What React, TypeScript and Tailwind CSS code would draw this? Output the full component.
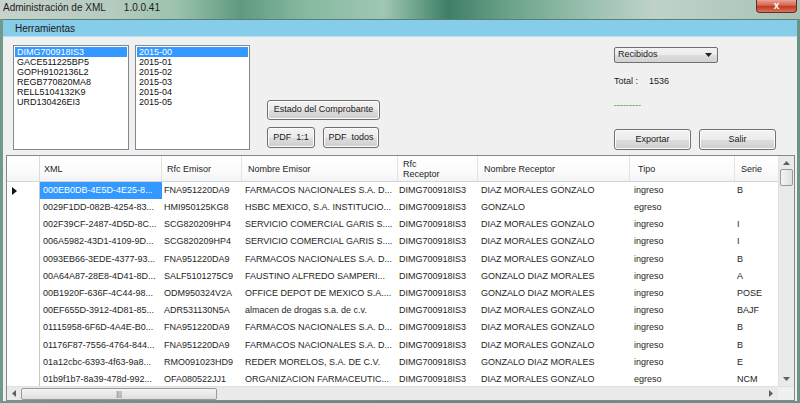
import React from "react";

const rows: string[][] = [
  ["000EB0DB-4E5D-4E25-8...", "FNA951220DA9", "FARMACOS NACIONALES S.A. D...", "DIMG700918IS3", "DIAZ MORALES GONZALO", "ingreso", "B"],
  ["0029F1DD-082B-4254-83...", "HMI950125KG8", "HSBC MEXICO, S.A. INSTITUCIO...", "DIMG700918IS3", "GONZALO", "egreso", ""],
  ["002F39CF-2487-4D5D-8C...", "SCG820209HP4", "SERVICIO COMERCIAL GARIS S....", "DIMG700918IS3", "DIAZ MORALES GONZALO", "ingreso", "I"],
  ["006A5982-43D1-4109-9D...", "SCG820209HP4", "SERVICIO COMERCIAL GARIS S....", "DIMG700918IS3", "DIAZ MORALES GONZALO", "ingreso", "I"],
  ["0093EB66-3EDE-4377-93...", "FNA951220DA9", "FARMACOS NACIONALES S.A. D...", "DIMG700918IS3", "DIAZ MORALES GONZALO", "ingreso", "B"],
  ["00A64A87-28E8-4D41-8D...", "SALF5101275C9", "FAUSTINO ALFREDO SAMPERI...", "DIMG700918IS3", "GONZALO DIAZ MORALES", "ingreso", "A"],
  ["00B1920F-636F-4C44-98...", "ODM950324V2A", "OFFICE DEPOT DE MEXICO S.A....", "DIMG700918IS3", "GONZALO DIAZ MORALES", "ingreso", "POSE"],
  ["00EF655D-3912-4D81-85...", "ADR531130N5A", "almacen de drogas s.a. de c.v.", "DIMG700918IS3", "DIAZ MORALES GONZALO", "ingreso", "BAJF"],
  ["01115958-6F6D-4A4E-B0...", "FNA951220DA9", "FARMACOS NACIONALES S.A. D...", "DIMG700918IS3", "DIAZ MORALES GONZALO", "ingreso", "B"],
  ["01176F87-7556-4764-844...", "FNA951220DA9", "FARMACOS NACIONALES S.A. D...", "DIMG700918IS3", "DIAZ MORALES GONZALO", "ingreso", "B"],
  ["01a12cbc-6393-4f63-9a8...", "RMO091023HD9", "REDER MORELOS, S.A. DE C.V.", "DIMG700918IS3", "GONZALO DIAZ MORALES", "ingreso", "E"],
  ["01b9f1b7-8a39-478d-992...", "OFA080522JJ1", "ORGANIZACION FARMACEUTIC...", "DIMG700918IS3", "DIAZ MORALES GONZALO", "egreso", "NCM"],
];

const colW = ["w-[122px]", "w-[80px]", "w-[156px]", "w-[80px]", "w-[152px]", "w-[105px]", "w-[44px]"];
const cellPad = ["pl-[3px]", "pl-[2px]", "pl-[3px]", "pl-[1px]", "pl-[3px]", "pl-[4px]", "pl-[2px]"];
const headPad = ["pl-[4px]", "pl-[5px]", "pl-[6px]", "pl-[5px]", "pl-[6px]", "pl-[8px]", "pl-[6px]"];

const btn =
  "border border-[#707070] rounded-[3px] bg-[linear-gradient(#f3f3f3_0%,#ebebeb_50%,#dddddd_51%,#cfcfcf_100%)] text-[9px] text-[#1a1a1a] flex items-center justify-center shadow-[inset_0_0_0_1px_#fcfcfc]";

function ListBox({ items, w }: { items: string[]; w: string }) {
  return (
    <div className={`${w} h-[105px] bg-white border border-[#828790] pt-[1px] px-[1px]`}>
      {items.map((t, i) => (
        <div
          key={t}
          className={`h-[10px] leading-[10px] pl-[2px] text-[9px] ${i === 0 ? "bg-[#3399ff] text-white" : "text-[#111]"}`}
        >
          {t}
        </div>
      ))}
    </div>
  );
}

export default function App() {
  const headers = ["XML", "Rfc Emisor", "Nombre Emisor", "Rfc|Receptor", "Nombre Receptor", "Tipo", "Serie"];
  return (
    <div
      className="w-[800px] h-[403px] flex flex-col overflow-hidden bg-[linear-gradient(90deg,#6f9a8a_0%,#5e8d7c_50%,#6a9486_100%)]"
      style={{ fontFamily: '"Liberation Sans", Arial, sans-serif' }}
    >
      {/* title bar */}
      <div className="h-[19px] flex items-start justify-between bg-[linear-gradient(90deg,#c7d2cc_0%,#b5cbbf_14%,#9cc3ae_22%,#5f9a80_30%,#86b8a0_38%,#9fc7b3_48%,#3f7f66_56%,#6da48b_64%,#9cc2b1_74%,#bfd2c9_82%,#a8c2b8_100%)]">
        <div className="pl-[3px] pt-[2px] text-[10px] leading-[12px] text-[#1c1c1c] flex">
          <span>Administración de XML</span>
          <span className="ml-[18px]">1.0.0.41</span>
        </div>
        <div className="mr-[3px] w-[41px] h-[13px] rounded-b-[4px] border border-[#6b2a20] border-t-0 bg-[linear-gradient(#e8a594_0%,#d5624c_45%,#c0391f_55%,#d9785c_100%)] flex items-center justify-center text-white text-[10px] font-bold leading-none">
          x
        </div>
      </div>

      {/* window body */}
      <div className="flex-1 mx-[3px] mb-[2px] bg-[#f0f0f0] flex flex-col border-t border-[#5a7f74]">
        {/* menu */}
        <div className="h-[17px] bg-[#86cdea] border-b border-[#b9e1f2] flex items-center pl-[12px] text-[10px] text-[#1a1a1a]">
          Herramientas
        </div>

        {/* top panel */}
        <div className="h-[118px] flex shrink-0">
          <div className="ml-[10px] mt-[8px]">
            <ListBox w="w-[116px]" items={["DIMG700918IS3", "GACE511225BP5", "GOPH9102136L2", "REGB770820MA8", "RELL5104132K9", "URD130426EI3"]} />
          </div>
          <div className="ml-[6px] mt-[8px]">
            <ListBox w="w-[115px]" items={["2015-00", "2015-01", "2015-02", "2015-03", "2015-04", "2015-05"]} />
          </div>
          <div className="ml-[17px] mt-[63px] flex flex-col">
            <div className={`${btn} w-[113px] h-[20px]`}>Estado del Comprobante</div>
            <div className="flex gap-[8px] mt-[7px]">
              <div className={`${btn} w-[48px] h-[21px]`}>PDF&nbsp;&nbsp;1:1</div>
              <div className={`${btn} w-[56px] h-[21px]`}>PDF&nbsp; todos</div>
            </div>
          </div>

          <div className="ml-auto mr-[20px] w-[163px] flex flex-col">
            <div className="mt-[10px] w-[104px] h-[16px] border border-[#707070] rounded-[2px] bg-[linear-gradient(#f2f2f2_0%,#ebebeb_50%,#dddddd_51%,#d2d2d2_100%)] flex items-center justify-between pl-[3px] pr-[5px] text-[9px] text-[#1a1a1a]">
              <span>Recibidos</span>
              <svg width="7" height="4" viewBox="0 0 7 4">
                <path d="M0 0H7L3.5 4Z" fill="#222" />
              </svg>
            </div>
            <div className="mt-[13px] h-[12px] flex items-center text-[9px] text-[#1a1a1a]">
              <span>Total :</span>
              <span className="ml-[11px]">1536</span>
            </div>
            <div className="mt-[12px] h-[12px] flex items-center text-[9px] text-[#3c9a3c]">---------</div>
            <div className="mt-[17px] flex gap-[8px]">
              <div className={`${btn} w-[77px] h-[21px]`}>Exportar</div>
              <div className={`${btn} w-[77px] h-[21px]`}>Salir</div>
            </div>
          </div>
        </div>

        {/* grid */}
        <div className="ml-[3px] mr-[2px] h-[246px] shrink-0 border border-[#828790] bg-white flex flex-col text-[9px] text-[#1e1e1e]">
          <div className="h-[230px] shrink-0 flex">
            <div className="flex-1 overflow-hidden flex flex-col">
              {/* header */}
              <div className="h-[26px] shrink-0 flex border-b border-[#d5d5d5] bg-[linear-gradient(#ffffff_0%,#fbfbfb_60%,#f3f4f6_100%)]">
                <div className="w-[33px] shrink-0 border-r border-[#dcdcdc]" />
                {headers.map((h, i) => (
                  <div key={h} className={`${colW[i]} shrink-0 border-r border-[#e3e3e3] flex flex-col justify-center ${headPad[i]} leading-[10px]`}>
                    {h.split("|").map((p) => (
                      <span key={p}>{p}</span>
                    ))}
                  </div>
                ))}
              </div>
              {/* rows */}
              {rows.map((r, ri) => (
                <div key={ri} className="h-[17.2px] shrink-0 flex">
                  <div className="w-[33px] shrink-0 border-r border-[#c8c8c8] flex items-center pl-[5px]">
                    {ri === 0 && (
                      <svg width="5" height="8" viewBox="0 0 5 8">
                        <path d="M0 0L5 4L0 8Z" fill="#111" />
                      </svg>
                    )}
                  </div>
                  {r.map((c, ci) => (
                    <div
                      key={ci}
                      className={`${colW[ci]} shrink-0 flex items-center whitespace-nowrap overflow-hidden ${cellPad[ci]} ${
                        ri === 0 && ci === 0 ? "bg-[#3399ff] text-white" : ""
                      }`}
                    >
                      {c}
                    </div>
                  ))}
                </div>
              ))}
            </div>
            {/* vertical scrollbar */}
            <div className="w-[16px] shrink-0 bg-[#eaeaea] border-l border-[#e0e0e0] flex flex-col items-center">
              <div className="h-[13px] w-full flex items-center justify-center">
                <svg width="7" height="4" viewBox="0 0 7 4">
                  <path d="M0 4L3.5 0L7 4Z" fill="#606060" />
                </svg>
              </div>
              <div className="w-[13px] h-[17px] rounded-[2px] border border-[#9a9a9a] bg-[linear-gradient(90deg,#f4f4f4,#e0e0e0)]" />
              <div className="flex-1" />
              <div className="h-[15px] w-full flex items-center justify-center">
                <svg width="7" height="4" viewBox="0 0 7 4">
                  <path d="M0 0H7L3.5 4Z" fill="#606060" />
                </svg>
              </div>
            </div>
          </div>
          {/* horizontal scrollbar */}
          <div className="flex-1 flex border-t border-[#e0e0e0]">
            <div className="flex-1 bg-[#eaeaea] flex items-center">
              <div className="w-[14px] flex items-center justify-center">
                <svg width="4" height="7" viewBox="0 0 4 7">
                  <path d="M4 0V7L0 3.5Z" fill="#606060" />
                </svg>
              </div>
              <div className="w-[196px] h-[12px] rounded-[2px] border border-[#9a9a9a] bg-[linear-gradient(#f4f4f4,#dedede)] flex items-center justify-center text-[7px] leading-none text-[#555]">
                |||
              </div>
              <div className="flex-1" />
              <div className="w-[14px] flex items-center justify-center">
                <svg width="4" height="7" viewBox="0 0 4 7">
                  <path d="M0 0V7L4 3.5Z" fill="#606060" />
                </svg>
              </div>
            </div>
            <div className="w-[16px] bg-[#f0f0f0]" />
          </div>
        </div>
      </div>
    </div>
  );
}
